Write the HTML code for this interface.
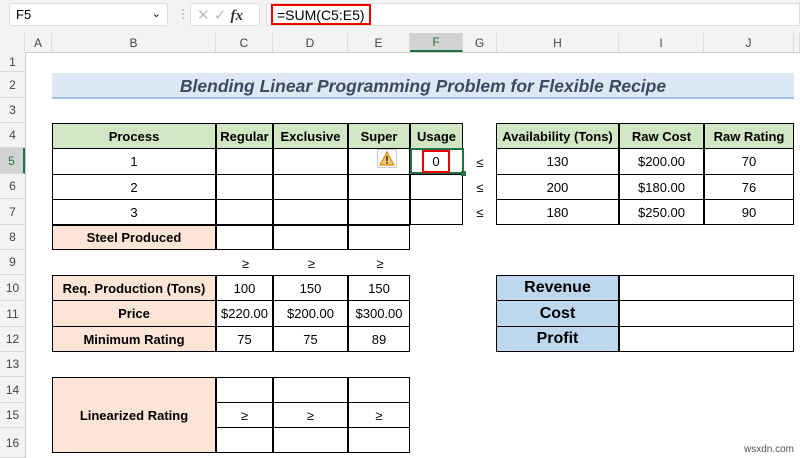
<!DOCTYPE html>
<html><head><style>
*{margin:0;padding:0;box-sizing:border-box}
body{width:800px;height:458px;background:#fff;font-family:"Liberation Sans",sans-serif;position:relative;overflow:hidden;color:#000}
.a{position:absolute}
.c{position:absolute;display:flex;align-items:center;justify-content:center;font-size:13px;border:1px solid #000;margin:-1px 0 0 -1px}
.b{font-weight:bold}
.g{background:#d1e7c4}
.o{background:#fce4d6}
.bl{background:#bdd7ee}
.rh{position:absolute;left:0;width:25px;text-align:center;font-size:12px;color:#444;border-bottom:1px solid #dcdcdc;display:flex;align-items:center;justify-content:center;background:#f3f3f3}
.ch{position:absolute;top:33px;height:19px;font-size:12px;color:#444;display:flex;align-items:center;justify-content:center;border-right:1px solid #dcdcdc;background:#f3f3f3}
.t{position:absolute;font-size:13px;display:flex;align-items:center;justify-content:center}
</style></head><body>
<div class="a" style="left:0;top:0;width:800px;height:52px;background:#f3f3f3"></div>
<div class="a" style="left:9px;top:3px;width:159px;height:23px;background:#fff;border:1px solid #ddd;border-radius:3px;font-size:13px;padding:3px 0 0 6px">F5<span style="position:absolute;right:6px;top:3px;font-size:11px">&#8964;</span></div>
<div class="a" style="left:177px;top:7px;color:#999;font-size:12px">&#8942;</div>
<div class="a" style="left:190px;top:3px;width:70px;height:23px;background:#fff;border:1px solid #ddd;border-radius:3px;color:#bbb;font-size:15px;padding:2px 0 0 6px">✕ ✓ <i style="color:#333;font-family:'Liberation Serif',serif;font-weight:bold">fx</i></div>
<div class="a" style="left:266px;top:3px;width:534px;height:23px;background:#fff;border:1px solid #ddd"></div>
<div class="a" style="left:271px;top:4px;width:100px;height:21px;border:2px solid #e00;font-size:14px;padding:1px 0 0 4px">=SUM(C5:E5)</div>
<div class="a" style="left:0;top:33px;width:25px;height:19px;border-right:1px solid #dcdcdc"></div>
<div class="ch" style="left:25px;width:27px">A</div>
<div class="ch" style="left:52px;width:164px">B</div>
<div class="ch" style="left:216px;width:57px">C</div>
<div class="ch" style="left:273px;width:75px">D</div>
<div class="ch" style="left:348px;width:62px">E</div>
<div class="ch" style="left:410px;width:53px;background:#d2d2d2;border-bottom:2px solid #217346;color:#217346">F</div>
<div class="ch" style="left:463px;width:34px">G</div>
<div class="ch" style="left:497px;width:122px">H</div>
<div class="ch" style="left:619px;width:85px">I</div>
<div class="ch" style="left:704px;width:90px">J</div>
<div class="ch" style="left:794px;width:6px"></div>
<div class="a" style="left:0;top:52px;width:800px;border-top:1px solid #ccc"></div>
<div class="rh" style="top:52px;height:20px">1</div>
<div class="rh" style="top:72px;height:26px">2</div>
<div class="rh" style="top:98px;height:25px">3</div>
<div class="rh" style="top:123px;height:25px">4</div>
<div class="rh" style="top:148px;height:26px;background:#d2d2d2;color:#217346;border-right:2px solid #217346">5</div>
<div class="rh" style="top:174px;height:25px">6</div>
<div class="rh" style="top:199px;height:26px">7</div>
<div class="rh" style="top:225px;height:25px">8</div>
<div class="rh" style="top:250px;height:25px">9</div>
<div class="rh" style="top:275px;height:26px">10</div>
<div class="rh" style="top:301px;height:26px">11</div>
<div class="rh" style="top:327px;height:25px">12</div>
<div class="rh" style="top:352px;height:25px">13</div>
<div class="rh" style="top:377px;height:26px">14</div>
<div class="rh" style="top:403px;height:25px">15</div>
<div class="rh" style="top:428px;height:30px">16</div>
<div class="a" style="left:25px;top:52px;height:406px;border-left:1px solid #ccc"></div>

<div class="a" style="left:52px;top:73px;width:742px;height:26px;background:#dce9f5;border-bottom:2px solid #9dc3e6;font-weight:bold;font-style:italic;font-size:17.5px;color:#3b4a5e;text-align:center;padding-top:3px;padding-right:0">Blending Linear Programming Problem for Flexible Recipe</div>

<!-- table 1 -->
<div class="c b g" style="left:53px;top:124px;width:164px;height:26px">Process</div>
<div class="c b g" style="left:217px;top:124px;width:57px;height:26px">Regular</div>
<div class="c b g" style="left:274px;top:124px;width:75px;height:26px">Exclusive</div>
<div class="c b g" style="left:349px;top:124px;width:62px;height:26px">Super</div>
<div class="c b g" style="left:411px;top:124px;width:53px;height:26px">Usage</div>
<div class="c" style="left:53px;top:149px;width:164px;height:27px">1</div>
<div class="c" style="left:217px;top:149px;width:57px;height:27px"></div>
<div class="c" style="left:274px;top:149px;width:75px;height:27px"></div>
<div class="c" style="left:349px;top:149px;width:62px;height:27px"></div>
<div class="c" style="left:411px;top:149px;width:53px;height:27px"></div>
<div class="c" style="left:53px;top:175px;width:164px;height:26px">2</div>
<div class="c" style="left:217px;top:175px;width:57px;height:26px"></div>
<div class="c" style="left:274px;top:175px;width:75px;height:26px"></div>
<div class="c" style="left:349px;top:175px;width:62px;height:26px"></div>
<div class="c" style="left:411px;top:175px;width:53px;height:26px"></div>
<div class="c" style="left:53px;top:200px;width:164px;height:26px">3</div>
<div class="c" style="left:217px;top:200px;width:57px;height:26px"></div>
<div class="c" style="left:274px;top:200px;width:75px;height:26px"></div>
<div class="c" style="left:349px;top:200px;width:62px;height:26px"></div>
<div class="c" style="left:411px;top:200px;width:53px;height:26px"></div>
<div class="c b o" style="left:53px;top:226px;width:164px;height:25px">Steel Produced</div>
<div class="c" style="left:217px;top:226px;width:57px;height:25px"></div>
<div class="c" style="left:274px;top:226px;width:75px;height:25px"></div>
<div class="c" style="left:349px;top:226px;width:62px;height:25px"></div>
<div class="a" style="left:410px;top:148px;width:54px;height:26px;border:2px solid #217346"></div>
<div class="a" style="left:461px;top:171px;width:5px;height:5px;background:#217346"></div>
<div class="a" style="left:422px;top:150px;width:28px;height:23px;border:2px solid #e00;font-size:13px;text-align:center;padding-top:2px;background:#fff">0</div>
<div class="a" style="left:377px;top:149px;width:20px;height:19px;border:1px solid #ccc;background:#fafafa">
<svg width="18" height="17" viewBox="0 0 18 17"><path d="M9 2 L16 15 H2 Z" fill="#f7c46c" stroke="#d9901a" stroke-width="1.2"/><rect x="8.2" y="6" width="1.6" height="5" fill="#333"/><rect x="8.2" y="12" width="1.6" height="1.6" fill="#333"/></svg></div>
<div class="t" style="left:470px;top:150px;width:20px;height:25px">≤</div>
<div class="t" style="left:470px;top:175px;width:20px;height:25px">≤</div>
<div class="t" style="left:470px;top:200px;width:20px;height:25px">≤</div>

<!-- table 2 -->
<div class="c b g" style="left:497px;top:124px;width:123px;height:26px">Availability (Tons)</div>
<div class="c b g" style="left:620px;top:124px;width:85px;height:26px">Raw Cost</div>
<div class="c b g" style="left:705px;top:124px;width:90px;height:26px">Raw Rating</div>
<div class="c" style="left:497px;top:149px;width:123px;height:27px">130</div>
<div class="c" style="left:620px;top:149px;width:85px;height:27px">$200.00</div>
<div class="c" style="left:705px;top:149px;width:90px;height:27px">70</div>
<div class="c" style="left:497px;top:175px;width:123px;height:26px">200</div>
<div class="c" style="left:620px;top:175px;width:85px;height:26px">$180.00</div>
<div class="c" style="left:705px;top:175px;width:90px;height:26px">76</div>
<div class="c" style="left:497px;top:200px;width:123px;height:26px">180</div>
<div class="c" style="left:620px;top:200px;width:85px;height:26px">$250.00</div>
<div class="c" style="left:705px;top:200px;width:90px;height:26px">90</div>

<div class="t" style="left:217px;top:251px;width:57px;height:25px">≥</div>
<div class="t" style="left:274px;top:251px;width:75px;height:25px">≥</div>
<div class="t" style="left:349px;top:251px;width:62px;height:25px">≥</div>

<!-- table 3 -->
<div class="c b o" style="left:53px;top:276px;width:164px;height:26px">Req. Production (Tons)</div>
<div class="c" style="left:217px;top:276px;width:57px;height:26px">100</div>
<div class="c" style="left:274px;top:276px;width:75px;height:26px">150</div>
<div class="c" style="left:349px;top:276px;width:62px;height:26px">150</div>
<div class="c b o" style="left:53px;top:301px;width:164px;height:27px">Price</div>
<div class="c" style="left:217px;top:301px;width:57px;height:27px">$220.00</div>
<div class="c" style="left:274px;top:301px;width:75px;height:27px">$200.00</div>
<div class="c" style="left:349px;top:301px;width:62px;height:27px">$300.00</div>
<div class="c b o" style="left:53px;top:327px;width:164px;height:26px">Minimum Rating</div>
<div class="c" style="left:217px;top:327px;width:57px;height:26px">75</div>
<div class="c" style="left:274px;top:327px;width:75px;height:26px">75</div>
<div class="c" style="left:349px;top:327px;width:62px;height:26px">89</div>

<!-- table 4 -->
<div class="c b bl" style="left:497px;top:276px;width:123px;height:26px;font-size:16px">Revenue</div>
<div class="c" style="left:620px;top:276px;width:175px;height:26px"></div>
<div class="c b bl" style="left:497px;top:301px;width:123px;height:27px;font-size:16px">Cost</div>
<div class="c" style="left:620px;top:301px;width:175px;height:27px"></div>
<div class="c b bl" style="left:497px;top:327px;width:123px;height:26px;font-size:16px">Profit</div>
<div class="c" style="left:620px;top:327px;width:175px;height:26px"></div>

<!-- table 5 -->
<div class="c b o" style="left:53px;top:378px;width:164px;height:76px">Linearized Rating</div>
<div class="c" style="left:217px;top:378px;width:57px;height:26px"></div>
<div class="c" style="left:274px;top:378px;width:75px;height:26px"></div>
<div class="c" style="left:349px;top:378px;width:62px;height:26px"></div>
<div class="c" style="left:217px;top:403px;width:57px;height:26px">≥</div>
<div class="c" style="left:274px;top:403px;width:75px;height:26px">≥</div>
<div class="c" style="left:349px;top:403px;width:62px;height:26px">≥</div>
<div class="c" style="left:217px;top:428px;width:57px;height:26px"></div>
<div class="c" style="left:274px;top:428px;width:75px;height:26px"></div>
<div class="c" style="left:349px;top:428px;width:62px;height:26px"></div>
<div class="a" style="right:6px;bottom:3px;font-size:10px;color:#555">wsxdn.com</div>
</body></html>
